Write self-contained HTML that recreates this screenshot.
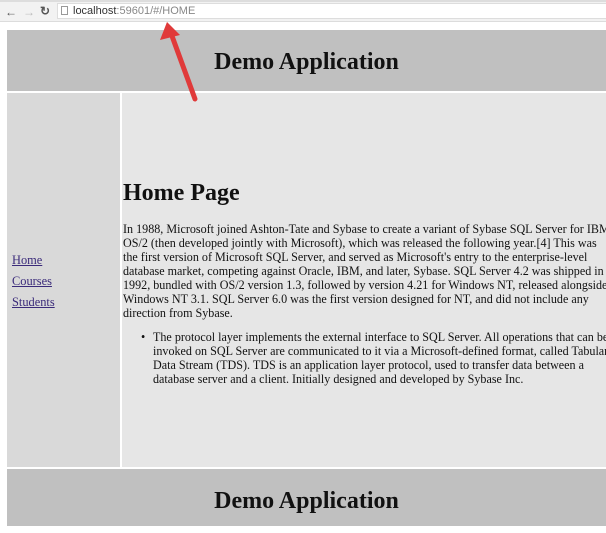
<!DOCTYPE html>
<html><head><meta charset="utf-8"><style>
*{margin:0;padding:0;box-sizing:border-box}
body{width:606px;height:526px;overflow:hidden;background:#fff;position:relative;font-family:"Liberation Serif",serif;color:#111}
.abs{position:absolute}
.chrome{left:0;top:0;width:606px;height:22px;background:#f2f2f2;border-top:2px solid #ddd;border-bottom:1px solid #dcdcdc}
.addr{left:57px;top:3px;width:549px;height:16px;background:#fff;border:1px solid #ddd;border-right:none;font-family:"Liberation Sans",sans-serif;font-size:11px;line-height:14px;padding-left:15px;color:#888}
.addr b{font-weight:normal;color:#333}
.hdr{left:7px;width:599px;background:#c0c0c0;text-align:center;font-weight:bold;font-size:24px}
.side{left:7px;top:93px;width:113px;height:374px;background:#d9d9d9}
.main{left:122px;top:93px;width:484px;height:374px;background:#e6e6e6}
a{color:#3a2a7a;text-decoration:underline}
.nav{left:12px;font-size:12.4px}
p{font-size:12.1px;line-height:14px;white-space:nowrap}
</style></head><body>
<div class="abs chrome"></div>
<div class="abs" style="left:5px;top:5px;font-family:'Liberation Sans',sans-serif;font-size:12px;color:#555;font-weight:bold">&#8592;</div>
<div class="abs" style="left:23px;top:5px;font-family:'Liberation Sans',sans-serif;font-size:12px;color:#bbb;font-weight:bold">&#8594;</div>
<div class="abs" style="left:40px;top:4px;font-family:'Liberation Sans',sans-serif;font-size:12px;color:#555;font-weight:bold">&#8635;</div>
<div class="abs addr"><b>localhost</b>:59601/#/HOME</div>
<div class="abs" style="left:61px;top:6px;width:7px;height:9px;border:1px solid #999;background:#fff"></div>
<div class="abs hdr" style="top:30px;height:61px;line-height:64px">Demo Application</div>
<div class="abs side"></div>
<div class="abs main"></div>
<a class="abs nav" style="top:253px">Home</a>
<a class="abs nav" style="top:274px">Courses</a>
<a class="abs nav" style="top:295px">Students</a>
<div class="abs" style="left:123px;top:179px;font-size:24px;font-weight:bold;line-height:28px">Home Page</div>
<p class="abs" style="left:123px;top:222px">In 1988, Microsoft joined Ashton-Tate and Sybase to create a variant of Sybase SQL Server for IBM<br>OS/2 (then developed jointly with Microsoft), which was released the following year.[4] This was<br>the first version of Microsoft SQL Server, and served as Microsoft's entry to the enterprise-level<br>database market, competing against Oracle, IBM, and later, Sybase. SQL Server 4.2 was shipped in<br>1992, bundled with OS/2 version 1.3, followed by version 4.21 for Windows NT, released alongside<br>Windows NT 3.1. SQL Server 6.0 was the first version designed for NT, and did not include any<br>direction from Sybase.</p>
<p class="abs" style="left:141px;top:330px">&#8226;</p>
<p class="abs" style="left:153px;top:330px">The protocol layer implements the external interface to SQL Server. All operations that can be<br>invoked on SQL Server are communicated to it via a Microsoft-defined format, called Tabular<br>Data Stream (TDS). TDS is an application layer protocol, used to transfer data between a<br>database server and a client. Initially designed and developed by Sybase Inc.</p>
<div class="abs hdr" style="top:469px;height:57px;line-height:64px">Demo Application</div>
<svg class="abs" style="left:0;top:0" width="606" height="526"><line x1="195" y1="99" x2="172" y2="36" stroke="#e03a3a" stroke-width="5" stroke-linecap="round"/><polygon points="167,22 160,40 180,35" fill="#e03a3a"/></svg>
</body></html>
